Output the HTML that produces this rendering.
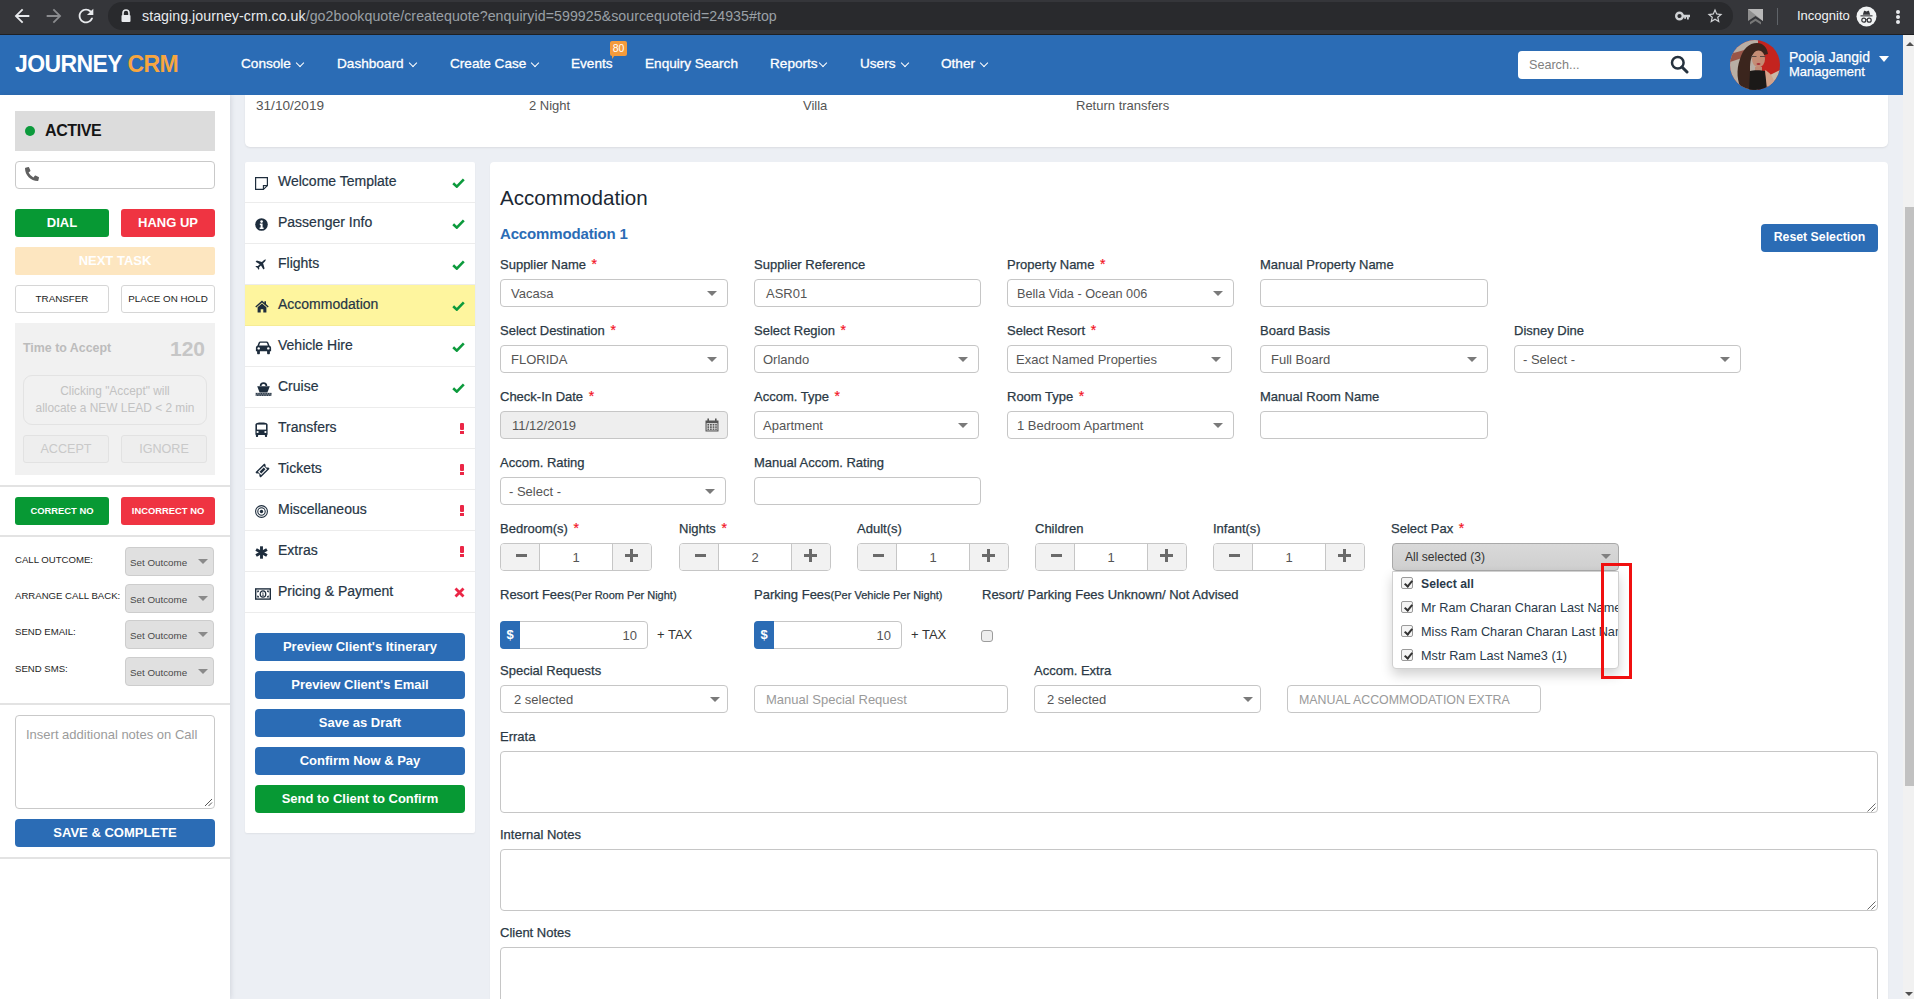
<!DOCTYPE html>
<html><head><meta charset="utf-8">
<style>
*{box-sizing:border-box;margin:0;padding:0}
html,body{width:1914px;height:999px;overflow:hidden;background:#eceff4;font-family:"Liberation Sans",sans-serif;color:#2b3945}
.a{position:absolute}
#chrome{left:0;top:0;width:1914px;height:35px;background:#35363a;border-bottom:1px solid #1f2023}
#omni{left:108px;top:2px;width:1625px;height:28px;background:#292a2d;border-radius:14px}
#hdr{left:0;top:35px;width:1903px;height:60px;background:#2b6cb5}
.nav{top:56px;font-size:13.6px;color:#fff;white-space:nowrap;-webkit-text-stroke:0.3px #fff}
.car{display:inline-block;width:6px;height:6px;border-right:1.5px solid #fff;border-bottom:1.5px solid #fff;transform:rotate(45deg);margin-left:6px;position:relative;top:-2px}
#sb{left:1903px;top:35px;width:11px;height:964px;background:#f1f1f1}
#left{left:0;top:95px;width:230px;height:904px;background:#fff;box-shadow:1px 0 5px rgba(40,50,70,0.13)}
.btn{position:absolute;border-radius:3px;color:#fff;font-weight:bold;text-align:center;white-space:nowrap}
.hr{position:absolute;left:0;width:230px;height:2px;background:#e3e3e3}
.so{position:absolute;left:125px;width:89px;height:29px;background:#e0e0e0;border:1px solid #cdcdcd;border-radius:4px;font-size:9.8px;color:#4a4a4a;padding:9px 0 0 4px;white-space:nowrap}
.so:after{content:"";position:absolute;right:5px;top:11px;border-left:5px solid transparent;border-right:5px solid transparent;border-top:5px solid #8a8a8a}
.info{top:98px;font-size:13px;color:#555;white-space:nowrap}
.stp{left:278px;font-size:14px;color:#263545;white-space:nowrap;-webkit-text-stroke:0.2px #263545}
.lbl{position:absolute;font-size:13px;line-height:15px;color:#2b3945;white-space:nowrap;-webkit-text-stroke:0.25px #2b3945}
.req{color:#f5101c;margin-left:2px;-webkit-text-stroke:0.2px #f0202c;font-size:14px}
.inp{position:absolute;height:28px;border:1px solid #c6c6c6;border-radius:4px;font-size:13px;line-height:28px;white-space:nowrap;overflow:hidden}
.sel:after{content:"";position:absolute;right:10px;top:11px;border-left:5px solid transparent;border-right:5px solid transparent;border-top:5px solid #7a7a7a}
.spn{position:absolute;top:543px;width:152px;height:28px;border:1px solid #c6c6c6;border-radius:4px;overflow:hidden;background:#fff}
.sm,.sp{position:absolute;top:0;width:39px;height:26px;background:#f2f2f2}
.sm{left:0;border-right:1px solid #c6c6c6}.sp{right:0;border-left:1px solid #c6c6c6}
.sm:after{content:"";position:absolute;left:15px;top:10px;width:11px;height:3px;background:#6a6a6a}
.sp:before{content:"";position:absolute;left:12px;top:10px;width:13px;height:3px;background:#6a6a6a}
.sp:after{content:"";position:absolute;left:17px;top:5px;width:3px;height:13px;background:#6a6a6a}
.sv{position:absolute;left:39px;right:39px;top:0;height:26px;line-height:28px;text-align:center;font-size:13px;color:#555}
.ta{position:absolute;left:500px;width:1378px;height:62px;border:1px solid #c6c6c6;border-radius:4px;background:#fff}
.cb{position:absolute;left:8px;width:12px;height:12px;border:1px solid #9a9a9a;border-radius:2px;background:#f4f4f4;margin-top:-1px}
.cb:after{content:"";position:absolute;left:3.5px;top:0.5px;width:3px;height:6px;border-right:2px solid #333;border-bottom:2px solid #333;transform:rotate(40deg)}
.sel7:after{right:7px}
</style></head><body>

<!-- browser chrome -->
<div id="chrome" class="a"></div>
<div id="omni" class="a"></div>
<svg class="a" style="left:11px;top:5px" width="22" height="22" viewBox="0 0 24 24"><path fill="#e8eaed" d="M20 11H7.83l5.59-5.59L12 4l-8 8 8 8 1.41-1.41L7.83 13H20v-2z"/></svg>
<svg class="a" style="left:43px;top:5px" width="22" height="22" viewBox="0 0 24 24"><path fill="#8b8c8f" d="M4 11h12.17l-5.59-5.59L12 4l8 8-8 8-1.41-1.41L16.17 13H4v-2z"/></svg>
<svg class="a" style="left:75px;top:5px" width="22" height="22" viewBox="0 0 24 24"><path fill="#e8eaed" d="M17.65 6.35A7.958 7.958 0 0012 4c-4.42 0-7.99 3.58-7.99 8s3.57 8 7.99 8c3.73 0 6.84-2.55 7.73-6h-2.08A5.99 5.99 0 0112 18c-3.31 0-6-2.69-6-6s2.69-6 6-6c1.66 0 3.14.69 4.22 1.78L13 11h7V4l-2.35 2.35z"/></svg>
<svg class="a" style="left:120px;top:9px" width="12" height="14" viewBox="0 0 12 14"><path d="M3 6V4a3 3 0 016 0v2" stroke="#e8eaed" stroke-width="1.6" fill="none"/><rect x="1.5" y="6" width="9" height="7" rx="1" fill="#e8eaed"/></svg>
<div class="a" style="left:142px;top:8px;font-size:14.2px;white-space:nowrap;color:#e8eaed;letter-spacing:0.05px">staging.journey-crm.co.uk<span style="color:#9aa0a6">/go2bookquote/createquote?enquiryid=599925&amp;sourcequoteid=24935#top</span></div>
<svg class="a" style="left:1675px;top:10px" width="16" height="12" viewBox="0 0 16 12"><circle cx="4.5" cy="6" r="3.3" fill="none" stroke="#d0d2d5" stroke-width="2.4"/><path d="M7.5 4.8h7.5v2.4h-1.2v2.2h-1.8V7.2h-1v1.6H9.2V7.2H7.5z" fill="#d0d2d5"/></svg>
<svg class="a" style="left:1706px;top:7px" width="18" height="18" viewBox="0 0 24 24"><path fill="#d0d2d5" d="M22 9.24l-7.19-.62L12 2 9.19 8.63 2 9.24l5.46 4.73L5.82 21 12 17.27 18.18 21l-1.63-7.03L22 9.24zM12 15.4l-3.76 2.27 1-4.28-3.32-2.88 4.38-.38L12 6.1l1.71 4.04 4.38.38-3.32 2.88 1 4.28L12 15.4z"/></svg>
<svg class="a" style="left:1747px;top:8px" width="17" height="17" viewBox="0 0 17 17"><path d="M1 1h15v12l-7.5-5L1 13z" fill="#8e8e8e"/><path d="M1 1l15 12V1z" fill="#b8b8b8"/><path d="M3 14l5.5-3.5L14 14v2.5l-5.5-3.5L3 16.5z" fill="#777"/></svg>
<div class="a" style="left:1777px;top:8px;width:1px;height:17px;background:#5f6368"></div>
<div class="a" style="left:1797px;top:8px;font-size:13px;color:#f1f3f4;white-space:nowrap">Incognito</div>
<svg class="a" style="left:1856px;top:6px" width="21" height="21" viewBox="0 0 21 21"><circle cx="10.5" cy="10.5" r="10" fill="#f1f3f4"/><path d="M4.5 9.3h12v1.1h-12z" fill="#35363a"/><path d="M6.8 8.8l1.1-3.6c.2-.5.6-.6 1-.4l1.6.6 1.6-.6c.4-.2.8-.1 1 .4l1.1 3.6z" fill="#35363a"/><circle cx="7.8" cy="14.2" r="2" fill="none" stroke="#35363a" stroke-width="1.2"/><circle cx="13.2" cy="14.2" r="2" fill="none" stroke="#35363a" stroke-width="1.2"/><path d="M9.6 13.8q.9-.6 1.8 0" stroke="#35363a" stroke-width="1" fill="none"/></svg>
<div class="a" style="left:1896px;top:10px;width:4px;height:4px;border-radius:2px;background:#e8eaed;box-shadow:0 5px 0 #e8eaed,0 10px 0 #e8eaed"></div>

<!-- header -->
<div id="hdr" class="a"></div>
<div class="a" style="left:15px;top:51px;font-size:23px;font-weight:bold;color:#fff;letter-spacing:-0.6px;white-space:nowrap">JOURNEY <span style="color:#f7a640">CRM</span></div>
<div class="a nav" style="left:241px">Console<i class="car"></i></div>
<div class="a nav" style="left:337px">Dashboard<i class="car"></i></div>
<div class="a nav" style="left:450px">Create Case<i class="car"></i></div>
<div class="a nav" style="left:571px">Events</div>
<div class="a" style="left:610px;top:41px;width:17px;height:15px;background:#f49b3c;border-radius:2px;color:#fff;font-size:10.5px;text-align:center;line-height:15px">80</div>
<div class="a" style="left:612px;top:55px;width:0;height:0;border-left:3px solid #f49b3c;border-right:3px solid transparent;border-bottom:4px solid transparent"></div>
<div class="a nav" style="left:645px">Enquiry Search</div>
<div class="a nav" style="left:770px">Reports<i class="car" style="margin-left:2px"></i></div>
<div class="a nav" style="left:860px">Users<i class="car"></i></div>
<div class="a nav" style="left:941px">Other<i class="car"></i></div>
<div class="a" style="left:1518px;top:51px;width:184px;height:28px;background:#fff;border-radius:4px"></div>
<div class="a" style="left:1529px;top:58px;font-size:12.6px;color:#808080">Search...</div>
<svg class="a" style="left:1670px;top:55px" width="19" height="19" viewBox="0 0 19 19"><circle cx="7.8" cy="7.8" r="5.8" fill="none" stroke="#26323e" stroke-width="2.5"/><path d="M12 12l5 5" stroke="#26323e" stroke-width="3" stroke-linecap="round"/></svg>
<svg class="a" style="left:1730px;top:40px" width="50" height="50" viewBox="0 0 50 50"><defs><clipPath id="cp"><circle cx="25" cy="25" r="25"/></clipPath></defs><g clip-path="url(#cp)">
<rect width="50" height="50" fill="#c3241f"/>
<path d="M0 0h28v50H0z" fill="#b9aea4"/>
<path d="M0 14l18-5v7L0 22z" fill="#9a5548"/>
<path d="M38 36l12-6v20H38z" fill="#c9b9a8"/>
<path d="M12 50C7 42 6 30 10 19 13 9 19 3 27 3c6 0 10 4 11 11l-4 1c-2-4-5-5-9-3-4 3-5 10-5 18 0 8 2 14 4 20z" fill="#3b251d"/>
<ellipse cx="28.5" cy="19" rx="6.5" ry="8.5" fill="#c58c74"/>
<path d="M22 11c2-5 8-6 12-3l-3 2c-3-1-6 0-8 4z" fill="#3b251d"/>
<path d="M21 16.5h5.5M30 16.5h5.5" stroke="#5a4a44" stroke-width="1"/>
<ellipse cx="28.5" cy="24" rx="2" ry="0.9" fill="#a8343c"/>
<path d="M25 27h7v4h-7z" fill="#c08a74"/>
<path d="M20 31c3-1 11-1 15 0l3 19H19z" fill="#1b1918"/>
<path d="M35 30c4 2 8 6 9 12l-1 8h-6z" fill="#d2a28a"/>
</g></svg>
<div class="a" style="left:1789px;top:49px;font-size:14px;color:#fff;white-space:nowrap;-webkit-text-stroke:0.25px #fff">Pooja Jangid</div>
<div class="a" style="left:1789px;top:64px;font-size:13px;color:#fff;white-space:nowrap;-webkit-text-stroke:0.25px #fff">Management</div>
<div class="a" style="left:1879px;top:56px;width:0;height:0;border-left:5px solid transparent;border-right:5px solid transparent;border-top:6px solid #fff"></div>
<div id="sb" class="a"></div>
<div class="a" style="left:1906px;top:42px;width:0;height:0;border-left:4px solid transparent;border-right:4px solid transparent;border-bottom:4px solid #505050"></div>
<div class="a" style="left:1905px;top:207px;width:9px;height:579px;background:#c1c1c1"></div>
<div class="a" style="left:1905px;top:992px;width:0;height:0;border-left:4px solid transparent;border-right:4px solid transparent;border-top:4px solid #505050"></div>

<!-- left sidebar -->
<div id="left" class="a"></div>
<div class="a" style="left:15px;top:111px;width:200px;height:40px;background:#dcdcdc"></div>
<div class="a" style="left:25px;top:126px;width:10px;height:10px;border-radius:5px;background:#0c9a3c"></div>
<div class="a" style="left:45px;top:122px;font-size:16px;font-weight:bold;letter-spacing:-0.4px;color:#151515">ACTIVE</div>
<div class="a" style="left:15px;top:161px;width:200px;height:28px;border:1px solid #c9c9c9;border-radius:4px;background:#fff"></div>
<svg class="a" style="left:25px;top:167px" width="14" height="14" viewBox="0 0 512 512"><path fill="#606060" d="M497.4 361.8l-112-48a24 24 0 00-28 6.9l-49.6 60.6A370.7 370.7 0 01130.6 204.1l60.6-49.6a23.9 23.9 0 006.9-28l-48-112A24.2 24.2 0 00122.6.6l-104 24A24 24 0 000 48c0 256.5 207.9 464 464 464a24 24 0 0023.4-18.6l24-104a24.3 24.3 0 00-14-27.6z"/></svg>
<div class="btn" style="left:15px;top:209px;width:94px;height:28px;background:#079934;font-size:13px;line-height:28px">DIAL</div>
<div class="btn" style="left:121px;top:209px;width:94px;height:28px;background:#ef3442;font-size:13px;line-height:28px">HANG UP</div>
<div class="btn" style="left:15px;top:247px;width:200px;height:28px;background:#fde6c0;font-size:13px;line-height:28px;border-radius:2px">NEXT TASK</div>
<div class="btn" style="left:15px;top:285px;width:94px;height:28px;background:#fff;border:1px solid #d6d6d6;color:#222;font-weight:normal;font-size:9.8px;line-height:26px">TRANSFER</div>
<div class="btn" style="left:121px;top:285px;width:94px;height:28px;background:#fff;border:1px solid #d6d6d6;color:#222;font-weight:normal;font-size:9.8px;line-height:26px">PLACE ON HOLD</div>
<div class="a" style="left:15px;top:323px;width:200px;height:152px;background:#f1f1f1"></div>
<div class="a" style="left:23px;top:341px;font-size:12.4px;font-weight:bold;color:#bcbcbc">Time to Accept</div>
<div class="a" style="left:170px;top:337px;font-size:21px;font-weight:bold;color:#c6c6c6">120</div>
<div class="a" style="left:23px;top:375px;width:184px;height:50px;border:1px solid #e3e3e3;border-radius:9px;font-size:11.9px;color:#c2c2c2;text-align:center;line-height:17px;padding-top:7px">Clicking "Accept" will<br>allocate a NEW LEAD &lt; 2 min</div>
<div class="btn" style="left:23px;top:435px;width:86px;height:28px;background:#eeeeee;border:1px solid #e2e2e2;color:#c9c9c9;font-weight:normal;font-size:12.6px;line-height:26px">ACCEPT</div>
<div class="btn" style="left:121px;top:435px;width:86px;height:28px;background:#eeeeee;border:1px solid #e2e2e2;color:#c9c9c9;font-weight:normal;font-size:12.6px;line-height:26px">IGNORE</div>
<div class="hr" style="top:485px"></div>
<div class="btn" style="left:15px;top:497px;width:94px;height:28px;background:#079934;font-size:9.4px;line-height:28px">CORRECT NO</div>
<div class="btn" style="left:121px;top:497px;width:94px;height:28px;background:#ef3442;font-size:9.4px;line-height:28px">INCORRECT NO</div>
<div class="hr" style="top:535px"></div>
<div class="a" style="left:15px;top:554px;font-size:9.6px;color:#1e1e1e;white-space:nowrap">CALL OUTCOME:</div>
<div class="a" style="left:15px;top:590px;font-size:9.6px;color:#1e1e1e;white-space:nowrap">ARRANGE CALL BACK:</div>
<div class="a" style="left:15px;top:626px;font-size:9.6px;color:#1e1e1e;white-space:nowrap">SEND EMAIL:</div>
<div class="a" style="left:15px;top:663px;font-size:9.6px;color:#1e1e1e;white-space:nowrap">SEND SMS:</div>
<div class="so" style="top:547px">Set Outcome</div>
<div class="so" style="top:584px">Set Outcome</div>
<div class="so" style="top:620px">Set Outcome</div>
<div class="so" style="top:657px">Set Outcome</div>
<div class="hr" style="top:703px"></div>
<div class="a" style="left:15px;top:715px;width:200px;height:94px;border:1px solid #c9c9c9;border-radius:4px;background:#fff;font-size:13px;color:#9b9b9b;padding:11px 0 0 10px;white-space:nowrap">Insert additional notes on Call</div>
<svg class="a" style="left:204px;top:798px" width="9" height="9" viewBox="0 0 9 9"><path d="M8 1L1 8M8 4.5L4.5 8" stroke="#555" stroke-width="1"/></svg>
<div class="btn" style="left:15px;top:819px;width:200px;height:28px;background:#2b6cb5;font-size:13px;line-height:28px;border-radius:4px">SAVE &amp; COMPLETE</div>
<div class="hr" style="top:857px"></div>

<!-- info card -->
<div class="a" style="left:245px;top:95px;width:1643px;height:52px;background:#fff;border-radius:0 0 5px 5px;box-shadow:0 1px 2px rgba(0,0,0,0.08)"></div>
<div class="a info" style="left:256px;font-size:13.6px">31/10/2019</div>
<div class="a info" style="left:529px">2 Night</div>
<div class="a info" style="left:803px">Villa</div>
<div class="a info" style="left:1076px">Return transfers</div>
<!-- steps -->
<div class="a" style="left:245px;top:162px;width:230px;height:671px;background:#fff;border-radius:2px;box-shadow:0 1px 2px rgba(0,0,0,0.06)"></div>
<div class="a" style="left:245px;top:285px;width:230px;height:41px;background:#fef59e"></div>
<svg class="a" style="left:255px;top:177px" width="13" height="13" viewBox="0 0 13 13"><path d="M.6 .6h11.8v8l-4 3.8H.6z" fill="none" stroke="#1e2d3d" stroke-width="1.2"/><path d="M8.4 12.4V8.6h4" fill="none" stroke="#1e2d3d" stroke-width="1.1"/></svg>
<div class="a stp" style="top:173px">Welcome Template</div>
<svg class="a" style="left:452px;top:178px" width="13" height="10" viewBox="0 0 13 10"><path d="M1.2 5.2l3.6 3.4L11.8 1.4" stroke="#0c9a3c" stroke-width="2.6" fill="none"/></svg>
<div class="a" style="left:245px;top:202px;width:230px;height:1px;background:#ececec"></div>
<svg class="a" style="left:255px;top:218px" width="13" height="13" viewBox="0 0 13 13"><circle cx="6.5" cy="6.5" r="6.3" fill="#1e2d3d"/><circle cx="6.6" cy="3.6" r="1.3" fill="#fff"/><path d="M4.8 5.6h2.8v4h1v1.4H4.6V9.6h1V7H4.8z" fill="#fff"/></svg>
<div class="a stp" style="top:214px">Passenger Info</div>
<svg class="a" style="left:452px;top:219px" width="13" height="10" viewBox="0 0 13 10"><path d="M1.2 5.2l3.6 3.4L11.8 1.4" stroke="#0c9a3c" stroke-width="2.6" fill="none"/></svg>
<div class="a" style="left:245px;top:243px;width:230px;height:1px;background:#ececec"></div>
<svg class="a" style="left:255px;top:259px" width="12" height="12" viewBox="0 0 12 12"><path d="M11.2.8c-.6-.6-1.7-.3-2.4.4L6.9 3.1 1.8 1.6.6 2.8l4.2 2.4L2.9 7.1 1.3 6.9.4 7.8l2 1 1 2 .9-.9-.2-1.6 1.9-1.9 2.4 4.2 1.2-1.2-1.5-5.1 1.9-1.9c.7-.7 1-1.8.4-2.4z" fill="#1e2d3d"/></svg>
<div class="a stp" style="top:255px">Flights</div>
<svg class="a" style="left:452px;top:260px" width="13" height="10" viewBox="0 0 13 10"><path d="M1.2 5.2l3.6 3.4L11.8 1.4" stroke="#0c9a3c" stroke-width="2.6" fill="none"/></svg>
<div class="a" style="left:245px;top:284px;width:230px;height:1px;background:#ececec"></div>
<svg class="a" style="left:255px;top:300px" width="14" height="13" viewBox="0 0 14 13"><path d="M7 .6L.3 6.4l.9 1L7 2.4l5.8 5 .9-1L11 4V1.2H9.4v1.5z" fill="#1e2d3d"/><path d="M2.6 7.2L7 3.4l4.4 3.8v5.4H8.3V9.2H5.7v3.4H2.6z" fill="#1e2d3d"/></svg>
<div class="a stp" style="top:296px">Accommodation</div>
<svg class="a" style="left:452px;top:301px" width="13" height="10" viewBox="0 0 13 10"><path d="M1.2 5.2l3.6 3.4L11.8 1.4" stroke="#0c9a3c" stroke-width="2.6" fill="none"/></svg>
<div class="a" style="left:245px;top:325px;width:230px;height:1px;background:#f6ec94"></div>
<svg class="a" style="left:255px;top:341px" width="17" height="14" viewBox="0 0 16 14"><path d="M3.2 1.6C3.5.9 4.1.5 4.8.5h6.4c.7 0 1.3.4 1.6 1.1l1.3 3.1c.9.3 1.5 1.1 1.5 2.1v3.4h-1.2v2c0 .6-.4 1-1 1h-.8c-.6 0-1-.4-1-1v-2H4.4v2c0 .6-.4 1-1 1h-.8c-.6 0-1-.4-1-1v-2H.4V6.8c0-1 .6-1.8 1.5-2.1z" fill="#1e2d3d"/><path d="M3.6 4.6l.9-2.4c.1-.3.4-.4.6-.4h5.8c.3 0 .5.2.6.4l.9 2.4z" fill="#fff"/><circle cx="3.2" cy="7.4" r="1.2" fill="#fff"/><circle cx="12.8" cy="7.4" r="1.2" fill="#fff"/></svg>
<div class="a stp" style="top:337px">Vehicle Hire</div>
<svg class="a" style="left:452px;top:342px" width="13" height="10" viewBox="0 0 13 10"><path d="M1.2 5.2l3.6 3.4L11.8 1.4" stroke="#0c9a3c" stroke-width="2.6" fill="none"/></svg>
<div class="a" style="left:245px;top:366px;width:230px;height:1px;background:#ececec"></div>
<svg class="a" style="left:255px;top:381px" width="17" height="15" viewBox="0 0 17 15"><path d="M5.6 5a2.9 2.9 0 015.8 0" fill="none" stroke="#1e2d3d" stroke-width="1.7"/><path d="M2.2 5.3h12.6l-2.4 6.3H4.6z" fill="#1e2d3d"/><g fill="#1e2d3d"><rect x="0.5" y="11.8" width="16" height="3.2" opacity=".6"/><rect x="1" y="12.2" width="1.2" height="1.2"/><rect x="3.4" y="12.2" width="1.2" height="1.2"/><rect x="5.8" y="12.2" width="1.2" height="1.2"/><rect x="8.2" y="12.2" width="1.2" height="1.2"/><rect x="10.6" y="12.2" width="1.2" height="1.2"/><rect x="13" y="12.2" width="1.2" height="1.2"/><rect x="15.2" y="12.2" width="1.2" height="1.2"/><rect x="2.2" y="13.6" width="1.2" height="1.2"/><rect x="4.6" y="13.6" width="1.2" height="1.2"/><rect x="7" y="13.6" width="1.2" height="1.2"/><rect x="9.4" y="13.6" width="1.2" height="1.2"/><rect x="11.8" y="13.6" width="1.2" height="1.2"/><rect x="14.2" y="13.6" width="1.2" height="1.2"/></g></svg>
<div class="a stp" style="top:378px">Cruise</div>
<svg class="a" style="left:452px;top:383px" width="13" height="10" viewBox="0 0 13 10"><path d="M1.2 5.2l3.6 3.4L11.8 1.4" stroke="#0c9a3c" stroke-width="2.6" fill="none"/></svg>
<div class="a" style="left:245px;top:407px;width:230px;height:1px;background:#ececec"></div>
<svg class="a" style="left:255px;top:422px" width="13" height="15" viewBox="0 0 13 15"><path d="M.4 2.6C.4 1 3 .4 6.5.4s6.1.6 6.1 2.2v9.6c0 .4-.2.7-.5.8v1.3c0 .3-.3.6-.6.6h-1c-.3 0-.6-.3-.6-.6v-1.2H3.1v1.2c0 .3-.3.6-.6.6h-1c-.3 0-.6-.3-.6-.6v-1.3c-.3-.1-.5-.4-.5-.8z" fill="#1e2d3d"/><path d="M2 2.6h9v5H2z" fill="#fff"/><circle cx="2.6" cy="10" r="1.1" fill="#fff"/><circle cx="10.4" cy="10" r="1.1" fill="#fff"/></svg>
<div class="a stp" style="top:419px">Transfers</div>
<div class="a" style="left:460px;top:423px;width:4px;height:7px;background:#eb2646;border-radius:1px"></div><div class="a" style="left:460px;top:431px;width:4px;height:3px;background:#eb2646"></div>
<div class="a" style="left:245px;top:448px;width:230px;height:1px;background:#ececec"></div>
<svg class="a" style="left:255px;top:463px" width="15" height="15" viewBox="0 0 15 15"><g transform="rotate(-45 7.5 7.5)"><path d="M1.2 3.8h12.6v2.1a1.4 1.6 0 000 3.2v2.1H1.2V9.1a1.4 1.6 0 000-3.2z" fill="#1e2d3d"/><rect x="3.3" y="5.2" width="8.4" height="4.6" fill="#fff"/><rect x="4.5" y="6.3" width="6" height="2.4" fill="#1e2d3d"/></g></svg>
<div class="a stp" style="top:460px">Tickets</div>
<div class="a" style="left:460px;top:464px;width:4px;height:7px;background:#eb2646;border-radius:1px"></div><div class="a" style="left:460px;top:472px;width:4px;height:3px;background:#eb2646"></div>
<div class="a" style="left:245px;top:489px;width:230px;height:1px;background:#ececec"></div>
<svg class="a" style="left:255px;top:505px" width="13" height="13" viewBox="0 0 13 13"><circle cx="6.5" cy="6.5" r="5.9" fill="none" stroke="#1e2d3d" stroke-width="1.1"/><circle cx="6.5" cy="6.5" r="3.7" fill="none" stroke="#1e2d3d" stroke-width="1.1"/><circle cx="6.5" cy="6.5" r="1.7" fill="#1e2d3d"/></svg>
<div class="a stp" style="top:501px">Miscellaneous</div>
<div class="a" style="left:460px;top:505px;width:4px;height:7px;background:#eb2646;border-radius:1px"></div><div class="a" style="left:460px;top:513px;width:4px;height:3px;background:#eb2646"></div>
<div class="a" style="left:245px;top:530px;width:230px;height:1px;background:#ececec"></div>
<svg class="a" style="left:255px;top:546px" width="13" height="13" viewBox="0 0 13 13"><g stroke="#1e2d3d" stroke-width="2.9" stroke-linecap="butt"><path d="M6.5 .3v12.4"/><path d="M1.1 3.4l10.8 6.2"/><path d="M1.1 9.6l10.8-6.2"/></g></svg>
<div class="a stp" style="top:542px">Extras</div>
<div class="a" style="left:460px;top:546px;width:4px;height:7px;background:#eb2646;border-radius:1px"></div><div class="a" style="left:460px;top:554px;width:4px;height:3px;background:#eb2646"></div>
<div class="a" style="left:245px;top:571px;width:230px;height:1px;background:#ececec"></div>
<svg class="a" style="left:255px;top:588px" width="16" height="12" viewBox="0 0 16 12"><rect x=".7" y=".9" width="14.6" height="10.2" fill="none" stroke="#1e2d3d" stroke-width="1.4"/><path d="M2.2 2.4h2a2 2 0 01-2 2zM13.8 2.4h-2a2 2 0 002 2zM2.2 9.6h2a2 2 0 00-2-2zM13.8 9.6h-2a2 2 0 012-2z" fill="#1e2d3d"/><ellipse cx="8" cy="6" rx="2.8" ry="3.2" fill="none" stroke="#1e2d3d" stroke-width="1.2"/><path d="M7.3 4.6h1.1v2.6h.6v.6H7v-.6h.6V5.3h-.3z" fill="#1e2d3d"/></svg>
<div class="a stp" style="top:583px">Pricing &amp; Payment</div>
<svg class="a" style="left:454px;top:587px" width="11" height="11" viewBox="0 0 11 11"><path d="M1.5 1.5l8 8M9.5 1.5l-8 8" stroke="#eb2646" stroke-width="2.8"/></svg>
<div class="a" style="left:245px;top:612px;width:230px;height:1px;background:#ececec"></div>
<div class="btn" style="left:255px;top:633px;width:210px;height:28px;background:#2b6cb5;font-size:13px;line-height:28px;border-radius:4px">Preview Client&#39;s Itinerary</div>
<div class="btn" style="left:255px;top:671px;width:210px;height:28px;background:#2b6cb5;font-size:13px;line-height:28px;border-radius:4px">Preview Client&#39;s Email</div>
<div class="btn" style="left:255px;top:709px;width:210px;height:28px;background:#2b6cb5;font-size:13px;line-height:28px;border-radius:4px">Save as Draft</div>
<div class="btn" style="left:255px;top:747px;width:210px;height:28px;background:#2b6cb5;font-size:13px;line-height:28px;border-radius:4px">Confirm Now &amp; Pay</div>
<div class="btn" style="left:255px;top:785px;width:210px;height:28px;background:#079934;font-size:13px;line-height:28px;border-radius:4px">Send to Client to Confirm</div>
<!-- main panel -->
<div class="a" style="left:490px;top:162px;width:1398px;height:850px;background:#fff;border-radius:4px;box-shadow:0 1px 2px rgba(0,0,0,0.06)"></div>
<div class="a" style="left:500px;top:186px;font-size:20.6px;color:#1b2733;white-space:nowrap">Accommodation</div>
<div class="a" style="left:500px;top:225px;font-size:15px;font-weight:bold;color:#2b6cb5;white-space:nowrap;letter-spacing:-0.15px">Accommodation 1</div>
<div class="btn" style="left:1761px;top:224px;width:117px;height:28px;background:#2b6cb5;font-size:12.3px;line-height:26px;border-radius:4px">Reset Selection</div>
<div class="lbl" style="left:500px;top:257px">Supplier Name <span class="req">*</span></div>
<div class="lbl" style="left:754px;top:257px">Supplier Reference</div>
<div class="lbl" style="left:1007px;top:257px">Property Name <span class="req">*</span></div>
<div class="lbl" style="left:1260px;top:257px">Manual Property Name</div>
<div class="inp sel" style="left:500px;top:279px;width:228px;background:#fff;padding-left:10px;color:#555">Vacasa</div>
<div class="inp" style="left:754px;top:279px;width:227px;background:#fff;padding-left:11px;color:#555">ASR01</div>
<div class="inp sel" style="left:1007px;top:279px;width:227px;background:#fff;padding-left:9px;color:#555;font-size:12.7px">Bella Vida - Ocean 006</div>
<div class="inp" style="left:1260px;top:279px;width:228px;background:#fff;padding-left:11px;color:#555"></div>
<div class="lbl" style="left:500px;top:323px">Select Destination <span class="req">*</span></div>
<div class="lbl" style="left:754px;top:323px">Select Region <span class="req">*</span></div>
<div class="lbl" style="left:1007px;top:323px">Select Resort <span class="req">*</span></div>
<div class="lbl" style="left:1260px;top:323px">Board Basis</div>
<div class="lbl" style="left:1514px;top:323px">Disney Dine</div>
<div class="inp sel" style="left:500px;top:345px;width:228px;background:#fff;padding-left:10px;color:#555">FLORIDA</div>
<div class="inp sel" style="left:754px;top:345px;width:225px;background:#fff;padding-left:8px;color:#555">Orlando</div>
<div class="inp sel" style="left:1007px;top:345px;width:225px;background:#fff;padding-left:8px;color:#555">Exact Named Properties</div>
<div class="inp sel" style="left:1260px;top:345px;width:228px;background:#fff;padding-left:10px;color:#555">Full Board</div>
<div class="inp sel" style="left:1514px;top:345px;width:227px;background:#fff;padding-left:8px;color:#555">- Select -</div>
<div class="lbl" style="left:500px;top:389px">Check-In Date <span class="req">*</span></div>
<div class="lbl" style="left:754px;top:389px">Accom. Type <span class="req">*</span></div>
<div class="lbl" style="left:1007px;top:389px">Room Type <span class="req">*</span></div>
<div class="lbl" style="left:1260px;top:389px">Manual Room Name</div>
<div class="inp" style="left:500px;top:411px;width:228px;background:#eeeeee;padding-left:11px;color:#555">11/12/2019</div>
<div class="inp sel" style="left:754px;top:411px;width:225px;background:#fff;padding-left:8px;color:#555">Apartment</div>
<div class="inp sel" style="left:1007px;top:411px;width:227px;background:#fff;padding-left:9px;color:#555">1 Bedroom Apartment</div>
<div class="inp" style="left:1260px;top:411px;width:228px;background:#fff;padding-left:11px;color:#555"></div>
<svg class="a" style="left:705px;top:418px" width="14" height="14" viewBox="0 0 14 14"><path d="M.5 2.5h13v11H.5z" fill="#555"/><path d="M1.6 5.2h10.8v7.2H1.6z" fill="#eee"/><g fill="#555"><rect x="2.4" y="6" width="1.8" height="1.6"/><rect x="5" y="6" width="1.8" height="1.6"/><rect x="7.6" y="6" width="1.8" height="1.6"/><rect x="10.2" y="6" width="1.6" height="1.6"/><rect x="2.4" y="8.3" width="1.8" height="1.6"/><rect x="5" y="8.3" width="1.8" height="1.6"/><rect x="7.6" y="8.3" width="1.8" height="1.6"/><rect x="10.2" y="8.3" width="1.6" height="1.6"/><rect x="2.4" y="10.5" width="1.8" height="1.4"/><rect x="5" y="10.5" width="1.8" height="1.4"/><rect x="7.6" y="10.5" width="1.8" height="1.4"/><rect x="10.2" y="10.5" width="1.6" height="1.4"/></g><path d="M3.2 .5v3M10.8 .5v3" stroke="#555" stroke-width="1.6"/></svg>
<div class="lbl" style="left:500px;top:455px">Accom. Rating</div>
<div class="lbl" style="left:754px;top:455px">Manual Accom. Rating</div>
<div class="inp sel" style="left:500px;top:477px;width:226px;background:#fff;padding-left:8px;color:#555">- Select -</div>
<div class="inp" style="left:754px;top:477px;width:227px;background:#fff;padding-left:11px;color:#555"></div>
<div class="lbl" style="left:500px;top:521px">Bedroom(s) <span class="req">*</span></div>
<div class="spn" style="left:500px"><div class="sm"></div><div class="sv">1</div><div class="sp"></div></div>
<div class="lbl" style="left:679px;top:521px">Nights <span class="req">*</span></div>
<div class="spn" style="left:679px"><div class="sm"></div><div class="sv">2</div><div class="sp"></div></div>
<div class="lbl" style="left:857px;top:521px">Adult(s)</div>
<div class="spn" style="left:857px"><div class="sm"></div><div class="sv">1</div><div class="sp"></div></div>
<div class="lbl" style="left:1035px;top:521px">Children</div>
<div class="spn" style="left:1035px"><div class="sm"></div><div class="sv">1</div><div class="sp"></div></div>
<div class="lbl" style="left:1213px;top:521px">Infant(s)</div>
<div class="spn" style="left:1213px"><div class="sm"></div><div class="sv">1</div><div class="sp"></div></div>
<div class="lbl" style="left:1391px;top:521px">Select Pax <span class="req">*</span></div>
<div class="lbl" style="left:500px;top:587px">Resort Fees<span style="font-size:11px">(Per Room Per Night)</span></div>
<div class="lbl" style="left:754px;top:587px">Parking Fees<span style="font-size:11px">(Per Vehicle Per Night)</span></div>
<div class="lbl" style="left:982px;top:587px">Resort/ Parking Fees Unknown/ Not Advised</div>
<div class="inp" style="left:500px;top:621px;width:148px;text-align:right;padding-right:10px;color:#555">10</div>
<div class="a" style="left:500px;top:621px;width:20px;height:28px;background:#2b6cb5;border-radius:4px 0 0 4px;color:#fff;font-size:13px;font-weight:bold;line-height:28px;text-align:center">$</div>
<div class="a" style="left:657px;top:627px;font-size:13px;color:#333;white-space:nowrap">+ TAX</div>
<div class="inp" style="left:754px;top:621px;width:148px;text-align:right;padding-right:10px;color:#555">10</div>
<div class="a" style="left:754px;top:621px;width:20px;height:28px;background:#2b6cb5;border-radius:4px 0 0 4px;color:#fff;font-size:13px;font-weight:bold;line-height:28px;text-align:center">$</div>
<div class="a" style="left:911px;top:627px;font-size:13px;color:#333;white-space:nowrap">+ TAX</div>
<div class="a" style="left:981px;top:630px;width:12px;height:12px;border:1px solid #9c9c9c;border-radius:3px;background:#eeeeee"></div>
<div class="lbl" style="left:500px;top:663px">Special Requests</div>
<div class="lbl" style="left:1034px;top:663px">Accom. Extra</div>
<div class="inp sel sel7" style="left:500px;top:685px;width:228px;background:#fff;padding-left:13px;color:#555">2 selected</div>
<div class="inp" style="left:754px;top:685px;width:254px;background:#fff;padding-left:11px;color:#9a9a9a">Manual Special Request</div>
<div class="inp sel sel7" style="left:1034px;top:685px;width:227px;background:#fff;padding-left:12px;color:#555">2 selected</div>
<div class="inp" style="left:1287px;top:685px;width:254px;background:#fff;padding-left:11px;color:#9a9a9a;font-size:12.4px">MANUAL ACCOMMODATION EXTRA</div>
<div class="lbl" style="left:500px;top:729px">Errata</div>
<div class="ta" style="top:751px"></div>
<svg class="a" style="left:1867px;top:803px" width="9" height="9" viewBox="0 0 9 9"><path d="M8.5 .5L.5 8.5M8.5 4.5L4.5 8.5" stroke="#6a6a6a" stroke-width="1"/></svg>
<div class="lbl" style="left:500px;top:827px">Internal Notes</div>
<div class="ta" style="top:849px"></div>
<svg class="a" style="left:1867px;top:901px" width="9" height="9" viewBox="0 0 9 9"><path d="M8.5 .5L.5 8.5M8.5 4.5L4.5 8.5" stroke="#6a6a6a" stroke-width="1"/></svg>
<div class="lbl" style="left:500px;top:925px">Client Notes</div>
<div class="ta" style="top:947px"></div>
<div class="a" style="left:1392px;top:543px;width:227px;height:28px;border:1px solid #a9a9a9;border-radius:4px;background:linear-gradient(#d9d9d9,#cfcfcf);font-size:12.1px;color:#333;line-height:26px;padding-left:12px;white-space:nowrap">All selected (3)</div>
<div class="a" style="left:1601px;top:554px;width:0;height:0;border-left:5px solid transparent;border-right:5px solid transparent;border-top:5px solid #808080"></div>
<div class="a" style="left:1392px;top:571px;width:227px;height:98px;border:1px solid #d0d0d0;border-radius:0 0 4px 4px;background:#fff;box-shadow:0 6px 12px rgba(0,0,0,0.18);overflow:hidden">
<div class="cb" style="top:6px"></div>
<div class="a" style="left:28px;top:5px;white-space:nowrap;font-size:12.7px;color:#2a3a4a;font-weight:bold;font-size:12.2px;">Select all</div>
<div class="cb" style="top:30px"></div>
<div class="a" style="left:28px;top:29px;white-space:nowrap;font-size:12.7px;color:#2a3a4a;">Mr Ram Charan Charan Last Name</div>
<div class="cb" style="top:54px"></div>
<div class="a" style="left:28px;top:53px;white-space:nowrap;font-size:12.7px;color:#2a3a4a;">Miss Ram Charan Charan Last Name</div>
<div class="cb" style="top:78px"></div>
<div class="a" style="left:28px;top:77px;white-space:nowrap;font-size:12.7px;color:#2a3a4a;">Mstr Ram Last Name3 (1)</div>
</div>
<div class="a" style="left:1601px;top:563px;width:31px;height:116px;border:3px solid #f01010"></div>
</body></html>
